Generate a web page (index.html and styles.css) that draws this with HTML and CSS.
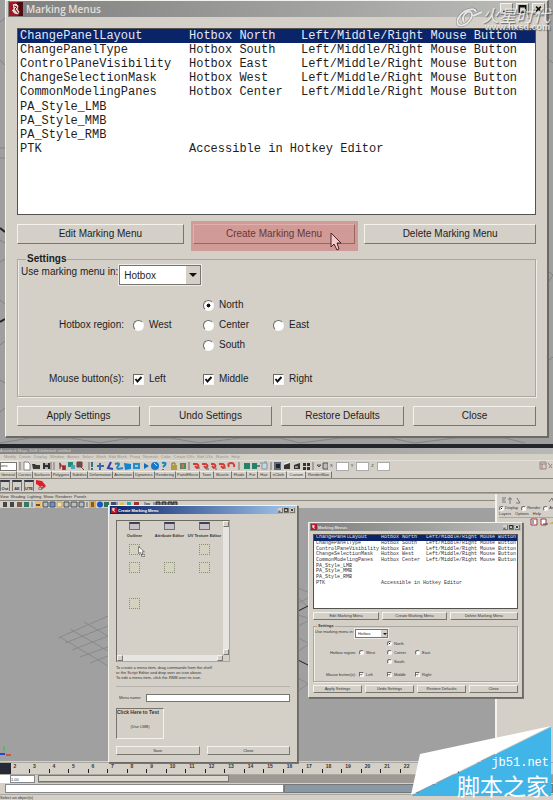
FILE: index.html
```html
<!DOCTYPE html>
<html lang="en">
<head>
<meta charset="utf-8">
<title>Marking Menus</title>
<link rel="stylesheet" href="styles.css">
</head>
<body>
<section class="closeup">
  <svg class="grid-lines" viewBox="0 0 553 444" preserveAspectRatio="none" aria-hidden="true">
    <path d="M0 22l5-4M0 60l5 5M0 148h5M0 158h5M0 240l5 3M0 262l5-3M0 300l5 4M0 345l5-4M0 380l5 3M0 412l5-4M549 60l4 3M549 272l4 3-4 6M549 360l4-3M0 443l30-5h40l30 5 30-5h40l30 5 40-5h40l20 5 40-5h50l25 5 40-5h50l20 5" fill="none" stroke="#838383"/>
    <path d="M0 228l5 4M0 322l5-3" stroke="#222" stroke-width="2"/>
  </svg>
  <section class="window dialog">
    <header class="titlebar">
      <svg class="app-icon" viewBox="0 0 14 14" aria-hidden="true"><path fill="#a61323" d="M0 0h14v14H0z"/><path fill="#4c0a12" d="M8 0h6v14H9z"/><path d="M3 2l4-1 3 3-1 3 2 3-2 3-4-1-3-4 2-1zM5 4l3 1-2 2 3 4" fill="#e9d2d2" stroke="#7b1720"/></svg>
      <h1>Marking Menus</h1>
      <div class="controls"><button aria-label="Minimize"><svg viewBox="0 0 10 10"><path d="M1 8h5" /></svg></button><button aria-label="Maximize"><svg viewBox="0 0 10 10"><path d="M1 1h8v8H1zM1 2h8"/></svg></button><button aria-label="Close"><svg viewBox="0 0 10 10"><path d="M2 2l6 6M8 2l-6 6"/></svg></button></div>
    </header>
    <div class="content">
      <ul class="menu-list">
        <li class="selected"><span>ChangePanelLayout</span><span>Hotbox North</span><span>Left/Middle/Right Mouse Button</span></li>
        <li><span>ChangePanelType</span><span>Hotbox South</span><span>Left/Middle/Right Mouse Button</span></li>
        <li><span>ControlPaneVisibility</span><span>Hotbox East</span><span>Left/Middle/Right Mouse Button</span></li>
        <li><span>ChangeSelectionMask</span><span>Hotbox West</span><span>Left/Middle/Right Mouse Button</span></li>
        <li><span>CommonModelingPanes</span><span>Hotbox Center</span><span>Left/Middle/Right Mouse Button</span></li>
        <li><span>PA_Style_LMB</span></li>
        <li><span>PA_Style_MMB</span></li>
        <li><span>PA_Style_RMB</span></li>
        <li><span>PTK</span><span class="wide">Accessible in Hotkey Editor</span></li>
      </ul>
      <div class="actions">
        <button>Edit Marking Menu</button>
        <div class="spot"><button>Create Marking Menu</button>
          <svg class="pointer" viewBox="0 0 12 19" aria-hidden="true"><path d="M1 1v14l3-3 3 6 2-1-2-6h4z" fill="#f4caca" stroke="#4a2225"/></svg>
        </div>
        <button>Delete Marking Menu</button>
      </div>
      <fieldset>
        <legend>Settings</legend>
        <div class="use-in"><label for="use">Use marking menu in:</label><select id="use"><option>Hotbox</option></select></div>
        <div class="options">
          <span class="caption region">Hotbox region:</span>
          <label class="north"><input type="radio" name="region" checked>North</label>
          <label class="west"><input type="radio" name="region">West</label>
          <label class="center"><input type="radio" name="region">Center</label>
          <label class="east"><input type="radio" name="region">East</label>
          <label class="south"><input type="radio" name="region">South</label>
          <span class="caption mouse">Mouse button(s):</span>
          <label class="mouse"><input type="checkbox" checked>Left</label>
          <label class="mouse"><input type="checkbox" checked>Middle</label>
          <label class="mouse"><input type="checkbox" checked>Right</label>
        </div>
      </fieldset>
      <div class="footer-actions"><button>Apply Settings</button><button>Undo Settings</button><button>Restore Defaults</button><button>Close</button></div>
    </div>
  </section>
  <div class="brand">
    <svg viewBox="0 0 30 24" aria-hidden="true"><path d="M20 6C19 0 6 4 2 13c-3 9 7 8 12 1 4-6 1-11-4-7-3 2-4 6-2 9M17 10l9-4" fill="none" stroke="#777" stroke-width="3"/><path d="M20 6C19 0 6 4 2 13c-3 9 7 8 12 1 4-6 1-11-4-7-3 2-4 6-2 9M17 10l9-4" fill="none" stroke="#eee" stroke-width="2"/></svg>
    <div><span class="brand-name" lang="zh">火星时代</span><span class="brand-url">www.hxsd.com</span></div>
  </div>
</section>

<section class="maya">
  <div class="app-title">Autodesk Maya 2008 Unlimited: untitled</div>
  <nav class="main-menu"><span>Modify</span><span>Create</span><span>Display</span><span>Window</span><span>Assets</span><span>Select</span><span>Mesh</span><span>Edit Mesh</span><span>Proxy</span><span>Normals</span><span>Color</span><span>Create UVs</span><span>Edit UVs</span><span>Muscle</span><span>Help</span></nav>
  <div class="toolbar">
    <select aria-label="Menu set"><option>ons</option></select>
    <svg class="tools" viewBox="17 0 311 10" aria-hidden="true">
      <path d="M20 1v8M51 1v8M54 1v8M89 1v8M189 1v8M239 1v8M271 1v8M313 1v8" stroke="#77736c"/>
      <path d="M24 1h4l2 2v6h-6z" fill="#fff" stroke="#888"/><path d="M32 3h3l1 1h4v4h-7z" fill="#393936"/><path d="M43 2h7v6h-7z" fill="#30302e"/><path d="M45 2h3v2h-3zM45 6h3v2h-3z" fill="#aaa"/>
      <path d="M59 1l3 3-2 1zM62 5l4-1v5h-4z" fill="#c83b38"/><path d="M60 5h4v4M60 2v6" fill="none" stroke="#623"/>
      <path d="M68 1h5v5h-5z" fill="#228a7b"/><path d="M71 4h4v4h-4z" fill="#45a5c6"/><path d="M77 1h5v5h-5zM80 5l4 4" fill="#555" stroke="#823b3b"/>
      <path d="M92 1v5M92 7v2" stroke="#35708a" stroke-width="2"/><path d="M97 5h7M100 2v7" stroke="#326cae" stroke-width="2"/><path d="M111 1l-3 6 5 1" fill="none" stroke="#333dac" stroke-width="2"/><path d="M115 3q6-2 3 2t5 2" fill="none" stroke="#2488bd" stroke-width="2"/>
      <path d="M124 2l7 1v5l-6 1z" fill="#1682d0"/><path d="M133 2h7v6h-7z" fill="#268ccc"/><path d="M135 4h3v2h-3z" fill="#8cd5ef"/><path d="M144 2l5 3-5 3z" fill="#146dbb"/><circle cx="155" cy="5" r="4" fill="#1878ca"/><path d="M154 2l3 3" stroke="#aef"/><path d="M162 2q5-1 3 2l-2 2M163 8v1" fill="none" stroke="#1685c8" stroke-width="2"/>
      <path d="M171 4h6v5h-6z" fill="#b49b39"/><path d="M172 4V2h3v2" fill="none" stroke="#7e6e2e"/><path d="M180 2h6v6h-6z" fill="#5b8758"/><path d="M182 3h2v4h-2z" fill="#c57551"/>
      <g fill="none" stroke="#d33d34" stroke-width="2"><path d="M193 3h4q3 2 0 4l-2-2M202 3h4q3 2 0 4l-2-2M211 3h3q3 2 0 4l-2-2M219 3h4q3 2 0 4l-2-2M229 6q-2-4 2-4 4 0 3 4"/></g>
      <path d="M197 7h3M206 8h3M215 8h2M223 7h3" stroke="#52606a"/>
      <path d="M244 2h6v6h-6zM252 2h5v6h-5z" fill="#26816b"/><path d="M257 5h3" stroke="#222"/><path d="M262 2h5v6h-5zM260 2h2M264 1h3" fill="#cbd8de" stroke="#7897a7"/>
      <path d="M274 1h7v8h-7z" fill="#5d6a7a"/><path d="M276 3h4v4h-4z" fill="#222"/><path d="M284 4l6-2v6h-6zM294 4l6-2v6h-6zM303 2h3v3h-3zM303 6h3v3h-3zM307 2h3v3h-3zM307 6h3v3h-3z" fill="#353535"/><path d="M284 3l6-2M295 6h3" stroke="#eee"/>
      <path d="M317 4h4l-2 2zM323 2h5v6h-5z" fill="#bbb" stroke="#555"/>
    </svg>
    <label>X<input></label><label>Y<input></label><label>Z<input></label>
    <svg class="tools-end" viewBox="0 0 14 10" aria-hidden="true"><path d="M1 1h6v7H1zM1 3h6M3 3v5M9 2l4 5M10 7l3-4" fill="none" stroke="#a1817d"/></svg>
  </div>
  <div class="shelf-tabs"><span>General</span><span>Curves</span><span>Surfaces</span><span>Polygons</span><span>Subdivs</span><span>Deformation</span><span>Animation</span><span>Dynamics</span><span>Rendering</span><span>PaintEffects</span><span>Toon</span><span>Muscle</span><span>Fluids</span><span>Fur</span><span>Hair</span><span>nCloth</span><span class="active">Custom</span><span>RenderMan</span></div>
  <div class="shelf"><span class="shelf-item">Out</span><span class="shelf-item">AE</span><span class="shelf-item">UTE</span><span class="shelf-item cp"><svg viewBox="0 0 10 10" aria-hidden="true"><path d="M0 0l6 1 4 5-2 2-2-2-2 1-2-2-2-1z" fill="#dc1e29"/></svg>CP</span></div>
  <div class="workspace">
    <div class="panel">
      <nav class="panel-menu"><span>View</span><span>Shading</span><span>Lighting</span><span>Show</span><span>Renderer</span><span>Panels</span></nav>
      <div class="panel-tools">
        <svg viewBox="0 0 178 7" aria-hidden="true"><path d="M3 1h4v5H3zM10 1h4v5h-4z" fill="#454545"/><path d="M17 1h5v5h-5z" fill="#795a45"/><path d="M24 1h5v5h-5z" fill="#347b65"/><path d="M35 0h6v7h-6z" fill="#edbd63"/><path d="M36 3h4v2h-4z" fill="#5e5439"/><path d="M43 1h5v5h-5zM64 1h5v5h-5zM71 1h6v5h-6zM79 1h5v5h-5z" fill="#babfbe" stroke="#464c4d"/><path d="M50 1h5v5h-5z" fill="#788eb3" stroke="#365080"/><path d="M57 1h5v5h-5z" fill="#f1deb0" stroke="#b99b54"/><path d="M32 1v5M87 1v5M117 1v5M145 1v5M154 1v5" stroke="#4f5e93"/><path d="M89 0h7v7h-7z" fill="#e2a94c"/><path d="M91 1h3v5h-3z" fill="#765e37"/><circle cx="100" cy="3.500" r="3" fill="#1955c0"/><path d="M104 1h5v5h-5z" fill="#31705a"/><path d="M111 1h5v5h-5z" fill="#444d69"/><path d="M120 2l4-1v4l-4 1z" fill="#d5c93c"/><path d="M127 1h4v5h-4z" fill="#36a4a2"/><path d="M134 1h5v5h-5z" fill="#a23138"/><path d="M146 3h4M156 1h4v5h-4zM162 1h4v5h-4zM168 1h4v5h-4zM173 1h4v5h-4z" fill="#777" stroke="#292929"/></svg>
      </div>
      <div class="viewport">
        <svg class="view-grid" viewBox="0 0 495 255" aria-hidden="true"><g fill="none" stroke="#898a8c"><path d="M58 130l50-22M65 135l43-17M72 142l36-14M80 149l28-10M90 155l18-7M70 121l38 22M84 114l24 14M60 129l48 29M298 80l10 4M298 95l10-5M298 107l10 3M298 118l10-5M298 130l10 5M298 143l10-6M298 90l10 9M298 170l10 6M298 183l10-7"/></g><path d="M298 103l10-5M298 152l10 5" stroke="#202020"/><path d="M4 238v5" stroke="#27c53b"/><path d="M0 246h5" stroke="#2448cb" stroke-width="2"/><path d="M6 247h5" stroke="#d25446" stroke-width="2"/></svg>
      </div>
    </div>
    <aside class="channel">
      <svg viewBox="0 0 56 8" aria-hidden="true"><path d="M3 1h4M3 3h3M3 5h4M11 0v7M9 2h4M18 1l3 5h-4M50 5l3-4 2 5" fill="none" stroke="#777"/></svg>
      <div class="modes"><label><input type="radio" name="mode" checked>Display</label><label><input type="radio" name="mode">Render</label><label><input type="radio" name="mode">An</label></div>
      <nav><span>Layers</span><span>Options</span><span>Help</span></nav>
      <svg viewBox="0 0 56 8" aria-hidden="true"><path d="M32 1h6v6h-6zM42 1h5v6h-5z" fill="#fff" stroke="#a13840"/><path d="M34 2v4M44 6h5" stroke="#444"/><path d="M50 6l5-3 1 3z" fill="#ccb52d"/></svg>
    </aside>
  </div>
  <div class="timeline"><span></span><span>2</span><span>3</span><span>4</span><span>5</span><span>6</span><span>7</span><span>8</span><span>9</span><span>10</span><span>11</span><span>12</span><span>13</span><span>14</span><span>15</span><span>16</span><span>17</span><span>18</span><span>19</span><span>20</span><span>21</span><span>22</span><span></span><span></span><span></span><span></span><span></span><span></span><span></span></div>
  <div class="range"><input aria-label="Start" value=""><input aria-label="Playback start" value="1.00"><div class="range-track"><span></span></div></div>
  <div class="command"><input aria-label="Command"><output></output></div>
  <footer>Select an object(s)</footer>

  <section class="window creator">
    <header class="titlebar">
      <svg class="app-icon" viewBox="0 0 14 14" aria-hidden="true"><path fill="#b51826" d="M0 0h14v14H0z"/><path d="M3 2l7 2-3 3 3 5-7-4z" fill="#f2dada"/></svg>
      <h2>Create Marking Menu</h2>
      <div class="controls"><button aria-label="Minimize"><svg viewBox="0 0 10 10"><path d="M1 8h5"/></svg></button><button aria-label="Maximize"><svg viewBox="0 0 10 10"><path d="M1 1h8v8H1zM1 2h8"/></svg></button><button aria-label="Close"><svg viewBox="0 0 10 10"><path d="M2 2l6 6M8 2l-6 6"/></svg></button></div>
    </header>
    <div class="creator-body">
      <div class="scroll-area">
        <div class="slots">
          <div class="item"><i></i>Outliner</div><div class="item"><i></i>Attribute Editor</div><div class="item"><i></i>UV Texture Editor</div>
          <b><svg class="drag" viewBox="0 0 12 19" aria-hidden="true"><path d="M1 1v12l3-2 2 4 2-1-1-4h4zM6 15h6v3H6z" fill="#fff" stroke="#333"/></svg></b><span></span><b></b>
          <b></b><b></b><b></b>
          <span></span><span></span><span></span>
          <b></b>
        </div>
        <div class="vbar"><i></i><i></i></div>
        <div class="hbar"><i></i><i></i></div>
      </div>
      <p>To create a menu item, drag commands from the shelf<br>or the Script Editor and drop over an icon above.<br>To edit a menu item, click the RMB over its icon.</p>
      <hr>
      <div class="name"><label for="name">Menu name:</label><input id="name"></div>
      <div class="test"><strong>Click Here to Test</strong><span>(Use LMB)</span></div>
      <div class="creator-actions"><button>Save</button><button>Close</button></div>
    </div>
  </section>

  <section class="window dialog mini">
    <header class="titlebar">
      <svg class="app-icon" viewBox="0 0 14 14" aria-hidden="true"><path fill="#b51826" d="M0 0h14v14H0z"/><path d="M3 2l7 2-3 3 3 5-7-4z" fill="#f2dada"/></svg>
      <h2>Marking Menus</h2>
      <div class="controls"><button aria-label="Minimize"><svg viewBox="0 0 10 10"><path d="M1 8h5"/></svg></button><button aria-label="Maximize"><svg viewBox="0 0 10 10"><path d="M1 1h8v8H1zM1 2h8"/></svg></button><button aria-label="Close"><svg viewBox="0 0 10 10"><path d="M2 2l6 6M8 2l-6 6"/></svg></button></div>
    </header>
    <div class="content">
      <ul class="menu-list">
        <li class="selected"><span>ChangePanelLayout</span><span>Hotbox North</span><span>Left/Middle/Right Mouse Button</span></li>
        <li><span>ChangePanelType</span><span>Hotbox South</span><span>Left/Middle/Right Mouse Button</span></li>
        <li><span>ControlPaneVisibility</span><span>Hotbox East</span><span>Left/Middle/Right Mouse Button</span></li>
        <li><span>ChangeSelectionMask</span><span>Hotbox West</span><span>Left/Middle/Right Mouse Button</span></li>
        <li><span>CommonModelingPanes</span><span>Hotbox Center</span><span>Left/Middle/Right Mouse Button</span></li>
        <li><span>PA_Style_LMB</span></li>
        <li><span>PA_Style_MMB</span></li>
        <li><span>PA_Style_RMB</span></li>
        <li><span>PTK</span><span class="wide">Accessible in Hotkey Editor</span></li>
      </ul>
      <div class="actions"><button>Edit Marking Menu</button><button>Create Marking Menu</button><button>Delete Marking Menu</button></div>
      <fieldset>
        <legend>Settings</legend>
        <div class="use-in"><label for="use-mini">Use marking menu in:</label><select id="use-mini"><option>Hotbox</option></select></div>
        <div class="options">
          <span class="caption region">Hotbox region:</span>
          <label class="north"><input type="radio" name="region-mini" checked>North</label>
          <label class="west"><input type="radio" name="region-mini">West</label>
          <label class="center"><input type="radio" name="region-mini">Center</label>
          <label class="east"><input type="radio" name="region-mini">East</label>
          <label class="south"><input type="radio" name="region-mini">South</label>
          <span class="caption mouse">Mouse button(s):</span>
          <label class="mouse"><input type="checkbox" checked>Left</label>
          <label class="mouse"><input type="checkbox" checked>Middle</label>
          <label class="mouse"><input type="checkbox" checked>Right</label>
        </div>
      </fieldset>
      <div class="footer-actions"><button>Apply Settings</button><button>Undo Settings</button><button>Restore Defaults</button><button>Close</button></div>
    </div>
  </section>

  <div class="site-mark">
    <svg viewBox="0 0 142 72" aria-hidden="true"><path d="M9 28L140 0 0 69z" fill="#fff"/><path d="M140 1v69H0z" fill="#41b5e8"/></svg>
    <span class="site-url">jb51.net</span><span class="site-name" lang="zh">脚本之家</span>
  </div>
</section>
</body>
</html>
```
FILE: styles.css
```css
* { box-sizing: border-box; }

:root {
  --face: #d4d0c8;
  --light: #f4f2ed;
  --shade: #77756f;
  --ui: "Liberation Sans", sans-serif;
  --mono: "Liberation Mono", monospace;
}

body {
  margin: 0;
  min-height: 100vh;
  display: flex;
  flex-direction: column;
  background: var(--face);
  color: #1d1d1d;
  font-family: var(--ui);
  overflow-x: hidden;
}

button, input, select { font: inherit; color: inherit; margin: 0; padding: 0; min-width: 0; border-radius: 0; }
ul, h1, h2, p { margin: 0; padding: 0; }

/* Enlarged view of the dialog */
.closeup { position: relative; padding: 0 4px 6px 5px; background: #a09fa0; }
.grid-lines { position: absolute; inset: 0; width: 100%; height: 100%; }

/* Windows */
.window {
  background: var(--face);
  border: 1px solid;
  border-color: var(--light) #6b6a67 #6b6a67 var(--light);
}

.dialog {
  --title: 16px;
  --text: 10px;
  --mono-size: 12px;
  --list-height: 187px;
  --rows: 127px;
  --list-columns: 169px 112px 1fr;
  --gap: 9px;
  --button: 20px;
  --row: 20px;
  --option: 70px;
  --caption: 115px;
  --label-gap: 5px;
  --mark: 11px;
  position: relative;
  border-width: 1px 2px 2px 1px;
  font-size: var(--text);
}

.dialog .content { padding: 11px 11px 10px; display: flex; flex-direction: column; gap: var(--gap); }

.titlebar {
  display: flex;
  align-items: center;
  gap: 3px;
  height: var(--title);
  margin: 0 2px;
  padding-left: 1px;
  background: linear-gradient(90deg, #808080, #bcbcba);
  color: #e2e0dc;
}

.titlebar h1, .titlebar h2 { flex: 1; font: 600 10px/14px "Open Sans", sans-serif; white-space: nowrap; }
.app-icon { width: 14px; height: 14px; }
.controls { display: flex; gap: 3px; }
.controls button { width: 13px; height: 12px; padding: 1px; display: flex; }
.controls svg { width: 100%; height: 100%; fill: none; stroke: #111; stroke-width: 2px; }

button {
  background: var(--face);
  border: 1px solid;
  border-color: var(--light) var(--shade) var(--shade) var(--light);
  white-space: nowrap;
}

.menu-list {
  height: var(--list-height);
  background: #fff;
  border: 1px solid #55534f;
  list-style: none;
  font-family: var(--mono);
  font-size: var(--mono-size);
  line-height: 1;
  overflow: hidden;
  display: flex;
  flex-direction: column;
}

.menu-list li {
  flex: 0 0 calc(var(--rows) / 9);
  display: grid;
  grid-template-columns: var(--list-columns);
  align-items: center;
  padding-left: 2px;
  white-space: pre;
}

.menu-list .selected { background: #0a246a; color: #e4e8f2; }
.menu-list .wide { grid-column: 2 / -1; }

.actions { display: grid; grid-template-columns: 166fr 162fr 171fr; gap: var(--gap); }
.footer-actions { display: grid; grid-template-columns: repeat(4, 1fr); gap: var(--gap); }
.dialog .actions button, .dialog .footer-actions button { height: var(--button); line-height: 1; }

.spot { position: relative; display: grid; }
.spot::after {
  content: "";
  position: absolute;
  inset: -3px -3px -7px -2px;
  background: rgb(203 80 80 / 42%);
  pointer-events: none;
}
.pointer { position: absolute; z-index: 1; right: 13px; top: 8px; width: 12px; height: 19px; }

fieldset {
  margin: 0;
  min-width: 0;
  padding: 0 0 7px;
  border: 1px solid #aaa79f;
  box-shadow: inset 1px 0 #eeece7, 1px 1px #eeece7;
}

legend { margin-left: 8px; padding: 0 1px; font: bold 10px/12px "Liberation Sans", sans-serif; }
.use-in { display: flex; gap: 1px; padding-left: 3px; height: 20px; line-height: 13px; white-space: nowrap; }

select {
  appearance: none;
  width: 82px;
  padding-left: 4px;
  border: 1px solid #77756f;
  background: #fff;
  outline: 1px solid #eeece7;
}
.use-in select { background: linear-gradient(var(--face), var(--face)) right / 14px 100% no-repeat #fff; }
.use-in::after {
  content: "";
  align-self: center;
  margin-left: -13px;
  z-index: 1;
  border: 4px solid transparent;
  border-top-color: #111;
  border-bottom: 0;
  pointer-events: none;
}

.options {
  display: grid;
  grid-template-columns: var(--caption) repeat(3, var(--option));
  grid-template-rows: var(--row) var(--row) var(--row) 34px;
  margin-top: 10px;
  align-items: center;
}
.options label { display: flex; align-items: center; gap: var(--label-gap); line-height: 1; }
.caption { text-align: right; padding-right: 9px; line-height: 1; white-space: nowrap; }
.region { grid-area: 2 / 1; }
.north { grid-area: 1 / 3; }
.west { grid-area: 2 / 2; }
.center { grid-area: 2 / 3; }
.east { grid-area: 2 / 4; }
.south { grid-area: 3 / 3; }
.mouse { grid-row: 4; align-self: end; height: var(--row); }
.caption.mouse { line-height: var(--row); }

input[type="radio"], input[type="checkbox"] {
  appearance: none;
  flex: none;
  width: var(--mark);
  height: var(--mark);
  border: 1px solid;
  border-color: #6c6a65 #f8f7f4 #f8f7f4 #6c6a65;
  background: #fff center / 100% 100% no-repeat;
}
input[type="radio"] { border-radius: 50%; }
input[type="radio"]:checked { background-image: radial-gradient(circle, #111 28%, transparent 34%); }
input[type="checkbox"]:checked { background-image: url("data:image/svg+xml,%3Csvg xmlns='http://www.w3.org/2000/svg' viewBox='0 0 9 9'%3E%3Cpath d='M1.500 4l2 2.500L7.500 2' fill='none' stroke='%23111' stroke-width='2'/%3E%3C/svg%3E"); }

.brand { position: absolute; right: 3px; top: 6px; display: flex; color: #efefef; text-shadow: 1px 1px 1px #555; opacity: .85; }
.brand svg { width: 30px; height: 24px; margin-right: -4px; }
.brand div { display: flex; flex-direction: column; align-items: flex-end; }
.brand-name { font: italic 17px/17px "Noto Sans CJK SC", sans-serif; }
.brand-url { font: bold 9px/8px "Liberation Sans", sans-serif; }

/* Maya main window */
.maya {
  position: relative;
  flex: 1;
  display: flex;
  flex-direction: column;
  border-top: 4px solid #24242b;
  font-size: 4px;
  line-height: 6px;
  color: #333;
  overflow: hidden;
}
.app-title { height: 6px; background: linear-gradient(90deg, #858585, #b8b8b6); color: #d7d5d1; white-space: nowrap; }
.main-menu { display: flex; gap: 3px; height: 6px; padding-left: 4px; color: #96928b; white-space: nowrap; }
.toolbar { display: flex; align-items: center; height: 11px; border-top: 1px solid #e3e0da; }
.toolbar select { width: 17px; height: 9px; padding: 0; line-height: 6px; }
.tools { width: 311px; height: 10px; }
.toolbar label { display: flex; align-items: center; gap: 3px; margin-left: 2px; }
.toolbar input { width: 13px; height: 9px; border: 1px solid #aaa; background: #fff; }
.tools-end { width: 14px; height: 10px; margin-left: auto; }
.shelf-tabs { display: flex; height: 8px; border-bottom: 1px solid #8b8882; white-space: nowrap; }
.shelf-tabs span { padding: 0 1px; border-right: 1px solid #77756f; border-top: 1px solid #eeece7; }
.shelf-tabs span:nth-child(n+11) { padding: 0 2px; }
.shelf-tabs .active { background: #dedbd4; }
.shelf { display: flex; gap: 2px; height: 14px; padding: 1px 0; border-bottom: 1px solid #8b8882; }
.shelf-item { width: 10px; height: 11px; padding-top: 4px; border: 1px solid #777; border-top: 2px solid #333943; border-bottom: 0; text-align: center; font-weight: bold; }
.shelf-item.cp { position: relative; border: 0; padding-top: 6px; }
.cp svg { position: absolute; inset: 0; width: 10px; height: 10px; }
.workspace { flex: 1; display: flex; border-top: 1px solid #aaa79f; }
.panel { flex: 1; display: flex; flex-direction: column; border-right: 2px solid var(--light); }
.panel-menu { display: flex; gap: 2px; height: 6px; }
.panel-tools { height: 8px; border-top: 1px solid #8b8882; }
.panel-tools svg { display: block; width: 178px; height: 7px; }
.viewport { flex: 1; position: relative; background: #a0a0a0; overflow: hidden; }
.view-grid { position: absolute; width: 495px; height: 255px; }
.channel { width: 56px; padding: 3px 0 0 2px; overflow: hidden; }
.channel svg { display: block; width: 56px; height: 8px; }
.channel label { display: flex; gap: 1px; align-items: center; --mark: 5px; }
.modes { display: flex; gap: 3px; }
.channel nav { display: flex; gap: 4px; border-bottom: 1px solid #aaa79f; }
.timeline { display: grid; grid-template-columns: repeat(29, 1fr); height: 13px; margin: 1px -5px 0 -10px; border: 1px solid #aaa79f; font-size: 5px; }
.timeline span { position: relative; padding-left: 3px; font-weight: bold; line-height: 7px; }
.timeline span::after { content: ""; position: absolute; right: 0; bottom: 1px; width: 1px; height: 4px; background: #222; }
.timeline span:first-child { background: #252a34; }
.range { display: flex; height: 8px; margin-bottom: 1px; }
.range input { width: 10px; height: 8px; border: 0; background: #fff; }
.range input + input { width: 25px; border: 1px solid #888; }
.range-track { flex: 1; margin-left: 3px; background: #9d9a93; }
.range-track span { display: block; width: 37%; height: 7px; border: 1px solid var(--shade); background: #dbd8d0; }
.command { display: flex; height: 9px; padding-left: 5px; }
.command input { width: 51%; border: 1px solid #888; background: #fff; }
.command output { flex: 1; background: #8998a5; border: 1px solid #777; }
footer { height: 6px; margin-top: 1px; border-top: 1px solid #aaa79f; line-height: 5px; }

/* Floating windows inside Maya */
.maya .titlebar { height: 8px; gap: 1px; margin: 0 1px; }
.maya .titlebar h2 { font: bold 4px/7px "Liberation Sans", sans-serif; }
.maya .app-icon { width: 6px; height: 6px; }
.maya .controls { gap: 1px; padding-right: 1px; }
.maya .controls button { width: 5px; height: 5px; padding: 0; border-width: 0 1px 1px 0; }

.creator { position: absolute; left: 108px; top: 57px; width: 190px; box-shadow: 1px 1px #77756f; }
.creator .titlebar { background: linear-gradient(90deg, #0a246a, #a6caf0); color: #fff; }
.creator-body { padding: 6px 7px 7px; display: flex; flex-direction: column; }
.scroll-area { display: grid; grid-template-columns: 1fr 6px; grid-template-rows: 1fr 6px; width: 114px; height: 142px; border: 1px solid #6c6a65; border-right-color: #aaa79f; border-bottom-color: #aaa79f; }
.slots { display: grid; grid-template-columns: repeat(3, 35px); grid-template-rows: 19px repeat(4, 18px); justify-items: center; align-items: center; }
.item { display: flex; flex-direction: column; align-items: center; gap: 3px; font: bold 4px/6px "Liberation Sans", sans-serif; white-space: nowrap; }
.item i { width: 11px; height: 8px; border: 1px solid #6f6f79; border-top: 2px solid #41414b; background: #c4c1ca; }
.slots b { position: relative; width: 11px; height: 11px; border: 1px dotted #888d78; background: #d3d2c1; }
.drag { position: absolute; left: 8px; top: 1px; width: 7px; height: 11px; }
.vbar, .hbar { display: flex; justify-content: space-between; background: #e7e5e1; }
.vbar { flex-direction: column; }
.vbar i, .hbar i { width: 6px; height: 6px; background: var(--face); border: 1px solid; border-color: var(--light) var(--shade) var(--shade) var(--light); }
.creator p { margin-top: 3px; line-height: 5px; }
.creator hr { width: 100%; margin: 6px 0 7px; border: 0; border-top: 1px solid #b4b1aa; }
.name { display: flex; justify-content: space-between; align-items: center; padding-left: 3px; height: 8px; white-space: nowrap; }
.name input { width: 144px; height: 8px; background: #fff; border: 1px solid #77756f; }
.test { width: 48px; height: 31px; margin-top: 6px; border: 1px solid; border-color: #77756f var(--light) var(--light) #77756f; display: flex; flex-direction: column; gap: 9px; text-align: center; }
.test strong { font: bold 5px/6px "Liberation Sans", sans-serif; white-space: nowrap; text-align: left; }
.creator-actions { display: grid; grid-template-columns: 1fr 1fr; gap: 7px; margin-top: 7px; }
.creator-actions button { height: 9px; line-height: 6px; }

.mini {
  --text: 4px;
  --mono-size: 5px;
  --list-height: 75px;
  --rows: 51px;
  --list-columns: 65px 45px 1fr;
  --gap: 3px;
  --button: 8px;
  --row: 9px;
  --option: 28px;
  --caption: 45px;
  --label-gap: 2px;
  --mark: 5px;
  position: absolute;
  left: 308px;
  top: 74px;
  width: 215px;
  border-width: 1px;
  box-shadow: 1px 1px #77756f;
}
.mini .content { padding: 3px 4px 4px; }
.mini legend { margin-left: 3px; font-size: 4px; line-height: 6px; }
.mini fieldset { padding-bottom: 2px; }
.mini .use-in { height: 9px; line-height: 6px; padding-left: 1px; }
.mini select { width: 33px; padding-left: 2px; background-size: 6px 100%; }
.mini .use-in::after { margin-left: -6px; border-width: 2px; border-bottom: 0; }
.mini .options { margin-top: 1px; grid-template-rows: var(--row) var(--row) var(--row) 13px; }
.mini .caption { padding-right: 3px; }

.site-mark { position: absolute; right: 0; bottom: 2px; width: 142px; height: 72px; color: #fff; display: flex; flex-direction: column; align-items: flex-end; padding: 29px 4px 0 0; }
.site-mark svg { position: absolute; inset: 0; width: 100%; height: 100%; }
.site-mark span { position: relative; white-space: nowrap; }
.site-url { font: 12px/17px "Liberation Mono", monospace; }
.site-name { font: 23px/26px "Noto Sans CJK SC", sans-serif; }
```
